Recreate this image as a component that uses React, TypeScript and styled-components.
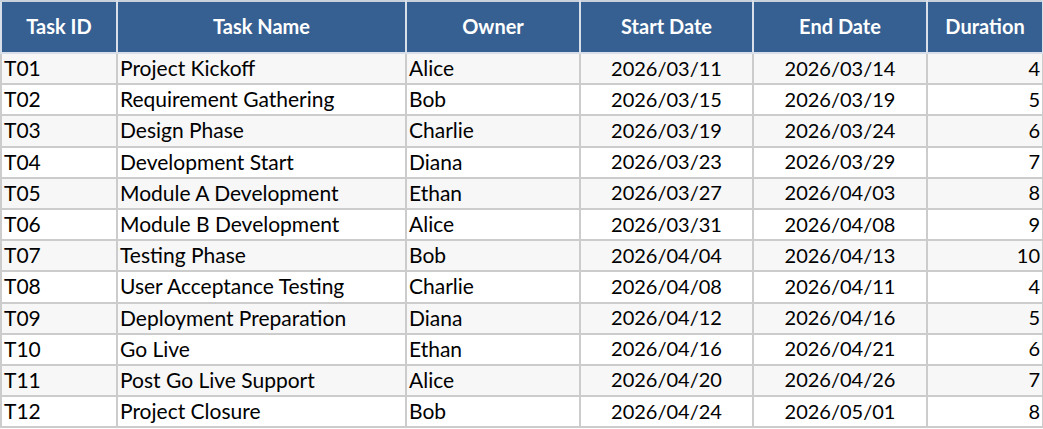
import React from "react";
import styled, { createGlobalStyle } from "styled-components";

const GlobalStyle = createGlobalStyle`
  html, body {
    margin: 0;
    padding: 0;
    background: #ffffff;
  }
  body {
    font-family: Lato, "Liberation Sans", sans-serif;
  }
`;

const Table = styled.table`
  border-collapse: collapse;
  table-layout: fixed;
  width: 1042px;
  font-family: Lato, "Liberation Sans", sans-serif;
  font-size: 21px;
  color: #000;
`;

const Col = styled.col<{ $w: number }>`
  width: ${(p) => p.$w}px;
`;

const HeadCell = styled.th`
  height: 48px;
  padding: 0 4px 2px;
  background: #366092;
  color: #ffffff;
  font-size: 20px;
  font-weight: 700;
  text-align: center;
  border: 2px solid #d9dfe8;
  border-top-color: #c9d1dc;
  white-space: nowrap;
  overflow: hidden;
`;

const Row = styled.tr<{ $odd: boolean }>`
  height: 31.2px;
  background: ${(p) => (p.$odd ? "#f7f7f7" : "#ffffff")};
`;

const Cell = styled.td<{ $align?: "left" | "center" | "right"; $digits?: boolean }>`
  padding: 0 2px 2px 2px;
  border: 2px solid #cccccc;
  text-align: ${(p) => p.$align ?? "left"};
  font-size: ${(p) => (p.$digits ? "20px" : "inherit")};
  white-space: nowrap;
  overflow: hidden;
  line-height: 1;
`;

interface Task {
  id: string;
  name: string;
  owner: string;
  start: string;
  end: string;
  duration: number;
}

const tasks: Task[] = [
  { id: "T01", name: "Project Kickoff", owner: "Alice", start: "2026/03/11", end: "2026/03/14", duration: 4 },
  { id: "T02", name: "Requirement Gathering", owner: "Bob", start: "2026/03/15", end: "2026/03/19", duration: 5 },
  { id: "T03", name: "Design Phase", owner: "Charlie", start: "2026/03/19", end: "2026/03/24", duration: 6 },
  { id: "T04", name: "Development Start", owner: "Diana", start: "2026/03/23", end: "2026/03/29", duration: 7 },
  { id: "T05", name: "Module A Development", owner: "Ethan", start: "2026/03/27", end: "2026/04/03", duration: 8 },
  { id: "T06", name: "Module B Development", owner: "Alice", start: "2026/03/31", end: "2026/04/08", duration: 9 },
  { id: "T07", name: "Testing Phase", owner: "Bob", start: "2026/04/04", end: "2026/04/13", duration: 10 },
  { id: "T08", name: "User Acceptance Testing", owner: "Charlie", start: "2026/04/08", end: "2026/04/11", duration: 4 },
  { id: "T09", name: "Deployment Preparation", owner: "Diana", start: "2026/04/12", end: "2026/04/16", duration: 5 },
  { id: "T10", name: "Go Live", owner: "Ethan", start: "2026/04/16", end: "2026/04/21", duration: 6 },
  { id: "T11", name: "Post Go Live Support", owner: "Alice", start: "2026/04/20", end: "2026/04/26", duration: 7 },
  { id: "T12", name: "Project Closure", owner: "Bob", start: "2026/04/24", end: "2026/05/01", duration: 8 },
];

const App: React.FC = () => {
  return (
    <>
      <GlobalStyle />
      <Table>
        <colgroup>
          <Col $w={116} />
          <Col $w={289} />
          <Col $w={174} />
          <Col $w={173} />
          <Col $w={174} />
          <Col $w={116} />
        </colgroup>
        <thead>
          <tr>
            <HeadCell>Task ID</HeadCell>
            <HeadCell>Task Name</HeadCell>
            <HeadCell>Owner</HeadCell>
            <HeadCell>Start Date</HeadCell>
            <HeadCell>End Date</HeadCell>
            <HeadCell>Duration</HeadCell>
          </tr>
        </thead>
        <tbody>
          {tasks.map((t, i) => (
            <Row key={t.id} $odd={i % 2 === 0}>
              <Cell>{t.id}</Cell>
              <Cell>{t.name}</Cell>
              <Cell>{t.owner}</Cell>
              <Cell $align="center" $digits>{t.start}</Cell>
              <Cell $align="center" $digits>{t.end}</Cell>
              <Cell $align="right" $digits>{t.duration}</Cell>
            </Row>
          ))}
        </tbody>
      </Table>
    </>
  );
};

export default App;
